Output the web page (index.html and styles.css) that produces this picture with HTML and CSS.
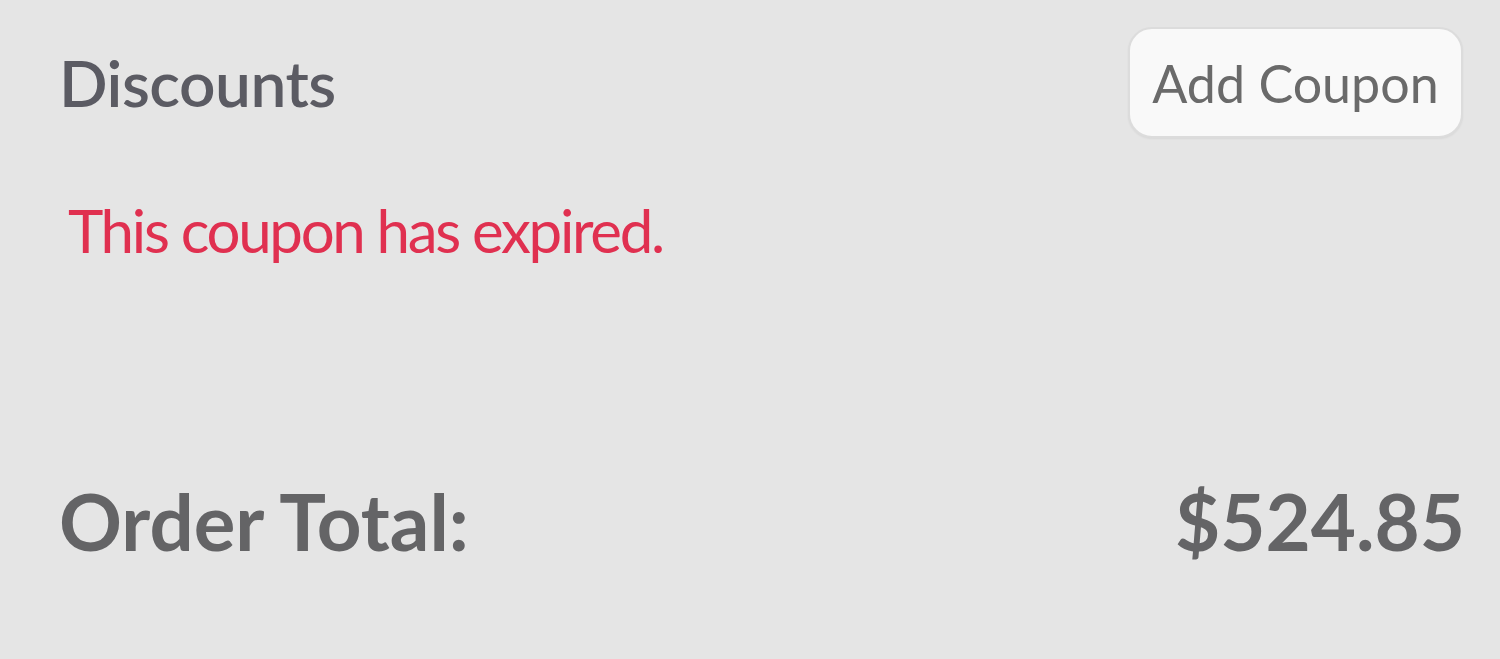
FILE: index.html
```html
<!DOCTYPE html>
<html>
<head>
<meta charset="utf-8">
<link rel="stylesheet" href="styles.css">
</head>
<body>
<div class="panel">
  <div class="head">
    <h2 class="title">Discounts</h2>
    <button class="btn">Add Coupon</button>
  </div>
  <p class="error">This coupon has expired.</p>
  <div class="total">
    <span>Order Total:</span>
    <span>$524.85</span>
  </div>
</div>
</body>
</html>
```
FILE: styles.css
```css
html, body {
  margin: 0;
  padding: 0;
  background: #e5e5e5;
  width: 1500px;
  height: 659px;
  overflow: hidden;
}
.panel {
  font-family: Lato, "Liberation Sans", sans-serif;
  padding: 27px 35px 0 59px;
  box-sizing: border-box;
  width: 1500px;
}
.head {
  display: flex;
  justify-content: space-between;
  align-items: center;
}
.title {
  margin: 0;
  font-size: 64px;
  font-weight: 600;
  color: #5b5b63;
  letter-spacing: -0.5px;
}
.btn {
  font-family: Lato, "Liberation Sans", sans-serif;
  font-size: 52px;
  color: #6a6a6a;
  background: #f9f9f9;
  border: 2px solid #dcdcdc;
  border-radius: 24px;
  height: 111px;
  width: 335px;
  margin-right: 2px;
  padding: 0;
  box-shadow: 0 1px 2px rgba(0,0,0,0.06);
}
.error {
  margin: 56px 0 0 9px;
  font-size: 60px;
  color: #e03050;
  letter-spacing: -2.3px;
}
.total {
  display: flex;
  justify-content: space-between;
  margin-top: 208px;
  font-size: 78px;
  font-weight: 700;
  color: #646466;
}
```
